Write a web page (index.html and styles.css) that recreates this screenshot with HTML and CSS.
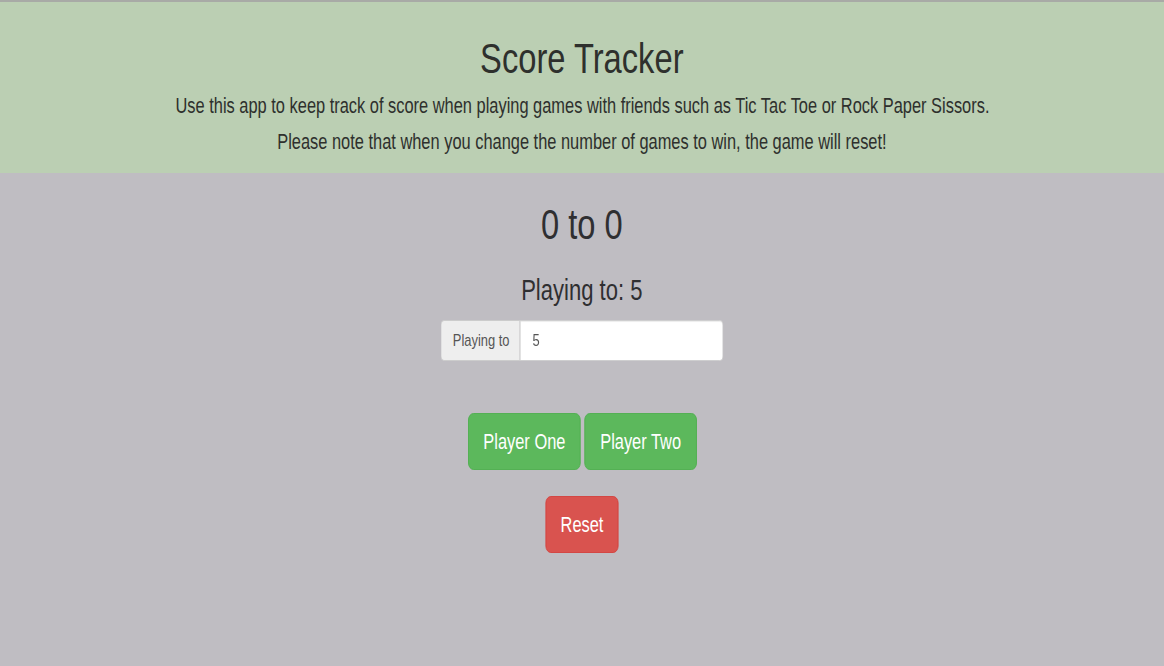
FILE: index.html
```html
<!DOCTYPE html>
<html lang="en">
<head>
<meta charset="utf-8">
<title>Score Tracker</title>
<link rel="stylesheet" href="styles.css">
</head>
<body>
  <header class="banner">
    <h1 class="title squeeze">Score Tracker</h1>
    <p class="lead squeeze">Use this app to keep track of score when playing games with friends such as Tic Tac Toe or Rock Paper Sissors.</p>
    <p class="lead squeeze">Please note that when you change the number of games to win, the game will reset!</p>
  </header>
  <main class="board">
    <h1 class="score squeeze">0 to 0</h1>
    <h3 class="target squeeze">Playing to: 5</h3>
    <div class="input-group squeeze">
      <span class="addon">Playing to</span>
      <input class="field" type="number" value="5">
    </div>
    <div class="players squeeze">
      <button class="btn btn-success">Player One</button>
      <button class="btn btn-success">Player Two</button>
    </div>
    <div class="resets squeeze">
      <button class="btn btn-danger">Reset</button>
    </div>
  </main>
</body>
</html>
```
FILE: styles.css
```css
html, body {
  margin: 0;
  padding: 0;
  background: #bfbdc2;
  height: 100%;
  overflow: hidden;
}

body {
  font-family: "Liberation Sans", Arial, Helvetica, sans-serif;
  color: #333;
}

/* the reference is horizontally condensed: each centered block is squeezed around its centre */
.squeeze {
  transform: scaleX(0.76);
}

.banner {
  background: #bbcfb3;
  border-top: 2px solid #a8aaa6;
  padding: 32px 0 13px;
  display: flex;
  flex-direction: column;
  align-items: center;
  text-align: center;
}

.title {
  margin: 0 0 6px;
  font-size: 43px;
  line-height: 48px;
  font-weight: 400;
  color: #2e302d;
}

.lead {
  margin: 0;
  font-size: 21.6px;
  line-height: 36px;
  color: #2e302d;
  white-space: nowrap;
}

.board {
  display: flex;
  flex-direction: column;
  align-items: center;
  padding-top: 27px;
}

.score {
  margin: 0;
  font-size: 43px;
  line-height: 48px;
  font-weight: 400;
  color: #2f2f31;
}

.target {
  margin: 24px 0 0;
  font-size: 29px;
  line-height: 36px;
  font-weight: 400;
  color: #2f2f31;
}

.input-group {
  margin-top: 12px;
  display: flex;
  width: 372px;
  height: 41px;
}

.addon {
  box-sizing: border-box;
  width: 104px;
  display: flex;
  align-items: center;
  padding-left: 15px;
  background: #eee;
  border: 1px solid #ccc;
  border-right: 0;
  border-radius: 5px 0 0 5px;
  font-size: 17px;
  color: #555;
  white-space: nowrap;
}

.field {
  box-sizing: border-box;
  flex: 1;
  min-width: 0;
  height: 41px;
  margin: 0;
  padding: 0 0 0 16px;
  border: 1px solid #ccc;
  border-radius: 0 5px 5px 0;
  background: #fff;
  box-shadow: inset 0 1px 1px rgba(0,0,0,.075);
  font-family: "Liberation Sans", Arial, sans-serif;
  font-size: 17px;
  color: #555;
  -moz-appearance: textfield;
  appearance: textfield;
}

.field::-webkit-inner-spin-button,
.field::-webkit-outer-spin-button {
  -webkit-appearance: none;
  margin: 0;
}

.players {
  margin-top: 52px;
  display: flex;
  gap: 5px;
}

.resets {
  margin-top: 26px;
  display: flex;
}

.btn {
  box-sizing: border-box;
  height: 57px;
  padding: 0;
  border: 1px solid transparent;
  border-radius: 7px;
  font-family: "Liberation Sans", Arial, sans-serif;
  font-size: 21.6px;
  line-height: 55px;
  color: #fff;
  white-space: nowrap;
  text-align: center;
  cursor: pointer;
}

.btn-success {
  background: #5cb85c;
  border-color: #4cae4c;
  width: 148px;
}

.btn-danger {
  background: #d9534f;
  border-color: #d43f3a;
  width: 96px;
}
```
